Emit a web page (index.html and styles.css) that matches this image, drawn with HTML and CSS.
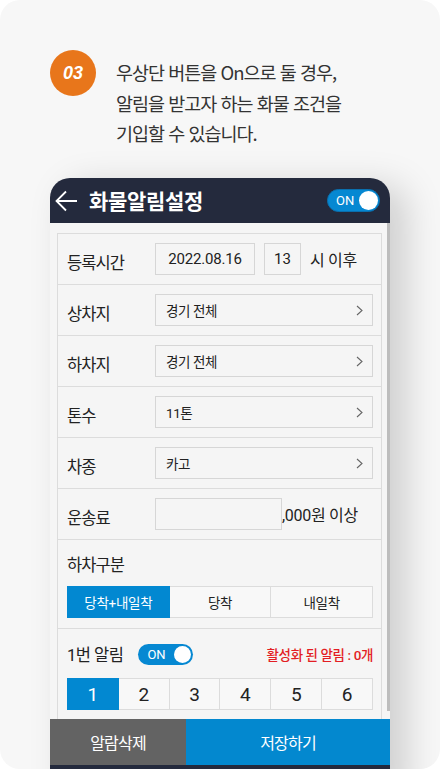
FILE: index.html
```html
<!DOCTYPE html>
<html lang="ko">
<head>
<meta charset="utf-8">
<title>화물알림설정</title>
<link rel="stylesheet" href="styles.css">
</head>
<body>
<div class="card">
  <div class="intro">
    <div class="badge">03</div>
    <p class="desc">우상단 버튼을 On으로 둘 경우,<br>알림을 받고자 하는 화물 조건을<br>기입할 수 있습니다.</p>
  </div>
  <div class="phone">
    <div class="topbar">
      <svg class="back" width="22" height="22" viewBox="0 0 22 22"><path d="M1.5 11 H22" fill="none" stroke="#fff" stroke-width="1.8"/><polyline points="11,1.5 1.5,11 11,20.5" fill="none" stroke="#fff" stroke-width="1.8"/></svg>
      <h1 class="title">화물알림설정</h1>
      <div class="switch switch-lg"><span>ON</span><i></i></div>
    </div>
    <div class="screen">
      <div class="panel">
        <div class="row">
          <span class="label">등록시간</span>
          <div class="box box-date">2022.08.16</div>
          <div class="box box-hour">13</div>
          <span class="suffix">시 이후</span>
        </div>
        <div class="row">
          <span class="label">상차지</span>
          <div class="box select"><span>경기 전체</span><svg width="7" height="11" viewBox="0 0 7 11"><polyline points="1,1 6,5.5 1,10" fill="none" stroke="#666" stroke-width="1.1"/></svg></div>
        </div>
        <div class="row">
          <span class="label">하차지</span>
          <div class="box select"><span>경기 전체</span><svg width="7" height="11" viewBox="0 0 7 11"><polyline points="1,1 6,5.5 1,10" fill="none" stroke="#666" stroke-width="1.1"/></svg></div>
        </div>
        <div class="row">
          <span class="label">톤수</span>
          <div class="box select"><span>11톤</span><svg width="7" height="11" viewBox="0 0 7 11"><polyline points="1,1 6,5.5 1,10" fill="none" stroke="#666" stroke-width="1.1"/></svg></div>
        </div>
        <div class="row">
          <span class="label">차종</span>
          <div class="box select"><span>카고</span><svg width="7" height="11" viewBox="0 0 7 11"><polyline points="1,1 6,5.5 1,10" fill="none" stroke="#666" stroke-width="1.1"/></svg></div>
        </div>
        <div class="row">
          <span class="label">운송료</span>
          <div class="box box-fee"></div>
          <span class="suffix suffix-fee">,000원 이상</span>
        </div>
        <div class="block">
          <div class="label label-block">하차구분</div>
          <div class="seg">
            <span class="active">당착+내일착</span>
            <span>당착</span>
            <span>내일착</span>
          </div>
        </div>
        <div class="block block-alarm">
          <div class="alarm-head">
            <span class="alarm-label">1번 알림</span>
            <div class="switch switch-sm"><span>ON</span><i></i></div>
            <span class="count">활성화 된 알림 : 0개</span>
          </div>
          <div class="seg nums">
            <span class="active">1</span>
            <span>2</span>
            <span>3</span>
            <span>4</span>
            <span>5</span>
            <span>6</span>
          </div>
        </div>
      </div>
      <div class="scrollbar"></div>
    </div>
    <div class="actions">
      <button class="btn btn-del">알람삭제</button>
      <button class="btn btn-save">저장하기</button>
    </div>
    <div class="navbar"></div>
  </div>
</div>
</body>
</html>
```
FILE: styles.css
```css
html, body {
  margin: 0;
  padding: 0;
  background: #ffffff;
}
body {
  width: 440px;
  height: 769px;
  overflow: hidden;
  font-family: Roboto, "Noto Sans CJK KR", sans-serif;
}
.card {
  height: 769px;
  background: #f7f7f7;
  border-radius: 20px;
  overflow: hidden;
  padding: 50px 0 0 50px;
  box-sizing: border-box;
}
.intro {
  display: flex;
  align-items: flex-start;
  gap: 20px;
}
.badge {
  flex: none;
  width: 46px;
  height: 46px;
  border-radius: 50%;
  background: #e8761b;
  color: #fff;
  font-family: "Liberation Sans", Arial, sans-serif;
  font-style: italic;
  font-weight: 700;
  font-size: 18px;
  line-height: 46px;
  text-align: center;
}
.desc {
  margin: 7px 0 0;
  font-family: "Noto Sans CJK KR", sans-serif;
  font-weight: 400;
  font-size: 18.5px;
  line-height: 30.5px;
  letter-spacing: -1px;
  color: #333;
}
.phone {
  margin-top: 29.5px;
  width: 340px;
  border-radius: 20px 20px 0 0;
  background: #f5f5f5;
  box-shadow: 16px 8px 36px rgba(0, 0, 0, 0.17);
  overflow: hidden;
}
.topbar {
  height: 45px;
  background: #242a3d;
  display: flex;
  align-items: center;
  padding: 0 10px 0 5px;
}
.back {
  display: block;
  flex: none;
}
.title {
  flex: 1;
  margin: 0 0 0 12px;
  color: #fff;
  font-family: "Noto Sans CJK KR", sans-serif;
  font-size: 21px;
  font-weight: 700;
  letter-spacing: -0.3px;
  line-height: 1;
}
.switch {
  display: flex;
  align-items: center;
  justify-content: space-between;
  background: #0688d2;
  box-sizing: border-box;
  color: #fff;
  font-family: Roboto, sans-serif;
}
.switch i {
  display: block;
  background: #fff;
  border-radius: 50%;
}
.switch-lg {
  width: 53px;
  height: 23px;
  border-radius: 12px;
  border: 1px solid #0a6fae;
  padding: 0 1px 0 8px;
  font-size: 13px;
}
.switch-lg i {
  width: 19px;
  height: 19px;
}
.switch-sm {
  width: 55px;
  height: 21px;
  border-radius: 11px;
  padding: 0 2px 0 9px;
  font-size: 13px;
  margin-left: 15px;
}
.switch-sm i {
  width: 17px;
  height: 17px;
}
.screen {
  display: flex;
  align-items: flex-start;
  height: 496px;
  padding-left: 7px;
  gap: 5px;
  overflow: hidden;
}
.panel {
  flex: none;
  width: 325px;
  margin-top: 10px;
  border: 1px solid #dcdcdc;
  box-sizing: border-box;
  padding-bottom: 40px;
}
.scrollbar {
  width: 3px;
  height: 488px;
  background: #bdbdbd;
}
.row {
  display: flex;
  align-items: center;
  height: 50px;
  border-bottom: 1px solid #dcdcdc;
  padding: 0 8px 0 9px;
}
.label {
  flex: none;
  width: 88px;
  margin-top: 6px;
  font-family: "Noto Sans CJK KR", sans-serif;
  font-size: 16.5px;
  letter-spacing: -0.9px;
  color: #222;
}
.box {
  height: 32px;
  border: 1px solid #d6d6d6;
  background: #f5f5f5;
  box-sizing: border-box;
  display: flex;
  align-items: center;
  color: #222;
}
.box-date {
  width: 100px;
  justify-content: center;
  font-size: 15px;
  letter-spacing: -0.2px;
}
.box-hour {
  width: 37px;
  margin-left: 9px;
  justify-content: center;
  font-size: 15px;
}
.suffix {
  margin-left: 9px;
  font-size: 16px;
  letter-spacing: -0.3px;
  color: #222;
}
.select {
  flex: 1;
  padding: 0 9px 0 10px;
  justify-content: space-between;
  font-size: 13.5px;
  letter-spacing: -0.4px;
  color: #222;
}
.select svg {
  display: block;
}
.box-fee {
  width: 127px;
}
.suffix-fee {
  margin-left: 0;
}
.block {
  padding: 12px 8px 10px 9px;
  border-bottom: 1px solid #dcdcdc;
}
.label-block {
  margin: 0 0 10px;
  width: auto;
  line-height: 24px;
}
.seg {
  display: flex;
  height: 32px;
}
.seg span {
  flex: 1;
  display: flex;
  align-items: center;
  justify-content: center;
  border: 1px solid #dcdcdc;
  border-left: none;
  background: #f8f8f8;
  font-size: 13.5px;
  letter-spacing: -0.3px;
  color: #222;
}
.seg span:first-child {
  border-left: 1px solid #dcdcdc;
}
.seg span.active {
  background: #0288d1;
  border-color: #0288d1;
  color: #fff;
}
.block-alarm {
  padding-top: 13px;
  border-bottom: none;
}
.alarm-head {
  display: flex;
  align-items: center;
  height: 24px;
  margin-bottom: 12px;
}
.alarm-label {
  font-size: 16.5px;
  letter-spacing: -0.5px;
  color: #222;
}
.count {
  margin-left: auto;
  font-size: 13.5px;
  font-weight: 500;
  letter-spacing: -0.4px;
  color: #e31e24;
}
.nums span {
  font-family: Roboto, sans-serif;
  font-size: 19px;
  letter-spacing: 0;
}
.actions {
  display: flex;
  height: 46px;
}
.btn {
  border: none;
  margin: 0;
  padding: 0;
  color: #fff;
  font-family: "Noto Sans CJK KR", sans-serif;
  font-size: 16px;
  letter-spacing: -0.8px;
}
.btn-del {
  width: 136px;
  background: #636363;
}
.btn-save {
  flex: 1;
  background: #0388cf;
}
.navbar {
  height: 30px;
  background: #242a3d;
}
```
